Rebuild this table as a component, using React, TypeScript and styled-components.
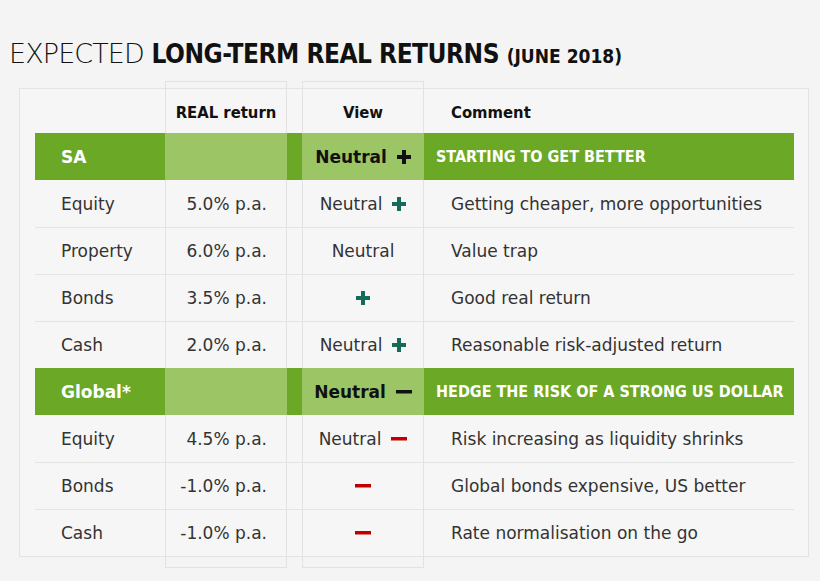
import React from "react";
import styled, { createGlobalStyle } from "styled-components";

const Global = createGlobalStyle`
  html, body { margin: 0; padding: 0; background: #f4f4f4; }
  body { font-family: "DejaVu Sans", "Liberation Sans", sans-serif; color: #333; }
`;

const Page = styled.div`
  width: 820px;
  height: 581px;
  background: #f4f4f4;
  box-sizing: border-box;
  padding-top: 36px;
  overflow: hidden;
`;

const Title = styled.h1`
  margin: 0 0 0 9px;
  font-family: "DejaVu Sans", sans-serif;
  font-size: 27px;
  line-height: 36px;
  font-weight: 200;
  color: #111;
  letter-spacing: -0.9px;
  white-space: nowrap;
`;

const Strong = styled.span`
  font-family: "DejaVu Sans Condensed", "DejaVu Sans", sans-serif;
  font-weight: 700;
  font-size: 26px;
  letter-spacing: -0.5px;
`;

const Small = styled.span`
  font-family: "DejaVu Sans Condensed", "DejaVu Sans", sans-serif;
  font-weight: 700;
  font-size: 19px;
  letter-spacing: 0;
`;

const Panel = styled.div`
  margin: 14px 0 0 19px;
  width: 790px;
  box-sizing: border-box;
  border: 1px solid #e3e3e3;
  background: #f6f6f6;
  padding: 0 14px 0 15px;
  display: grid;
  grid-template-columns: 130px 122px 15px 122px 370px;
  grid-template-rows: 44px repeat(9, 47px);
`;

const Frame = styled.div<{ $col: number }>`
  grid-column: ${(p) => p.$col};
  grid-row: 1 / -1;
  margin: -8px 0 -12px 0;
  border: 1px solid #e2e2e2;
  z-index: 0;
`;

const Row = styled.div<{ $row: number; $sep?: boolean; $green?: boolean }>`
  grid-column: 1 / -1;
  grid-row: ${(p) => p.$row};
  display: grid;
  grid-template-columns: 130px 122px 15px 122px 370px;
  position: relative;
  z-index: 1;
  background: ${(p) => (p.$green ? "#6aa826" : "transparent")};
  border-top: ${(p) => (p.$sep ? "1px solid #e4e4e4" : "none")};
  font-size: 17px;
  align-items: center;
`;

const Cell = styled.div<{
  $align?: "left" | "right" | "center";
  $pad?: string;
  $light?: boolean;
  $bold?: boolean;
  $color?: string;
}>`
  height: 100%;
  display: flex;
  align-items: center;
  justify-content: ${(p) =>
    p.$align === "right" ? "flex-end" : p.$align === "center" ? "center" : "flex-start"};
  padding: ${(p) => p.$pad || "0"};
  box-sizing: border-box;
  background: ${(p) => (p.$light ? "#9cc566" : "transparent")};
  font-weight: ${(p) => (p.$bold ? 700 : 400)};
  color: ${(p) => p.$color || "#333"};
  white-space: nowrap;
`;

const HeadCell = styled(Cell)`
  font-family: "DejaVu Sans Condensed", "DejaVu Sans", sans-serif;
  font-size: 16.5px;
  font-weight: 700;
  color: #111;
  padding-top: 3px;
`;

const Caps = styled.span`
  font-family: "DejaVu Sans Condensed", "DejaVu Sans", sans-serif;
  font-weight: 700;
  font-size: 16px;
  color: #fff;
`;

const Sign = styled.svg<{ $solo?: boolean }>`
  margin-left: ${(p) => (p.$solo ? "0" : "10px")};
  flex: none;
`;

type Kind = "plus" | "minus";

const SignIcon = ({ kind, color, solo }: { kind: Kind; color: string; solo?: boolean }) =>
  kind === "plus" ? (
    <Sign $solo={solo} width="14" height="14" viewBox="0 0 14 14">
      <rect x="5" y="0" width="4" height="14" fill={color} />
      <rect x="0" y="5" width="14" height="4" fill={color} />
    </Sign>
  ) : (
    <Sign $solo={solo} width="16" height="4" viewBox="0 0 16 4">
      <rect x="0" y="0" width="16" height="3.5" fill={color} />
    </Sign>
  );

const TEAL = "#146b58";
const RED = "#c00000";

type Data = {
  label: string;
  ret: string;
  neutral: boolean;
  sign?: Kind;
  comment: string;
};

const sections: {
  name: string;
  sign: Kind;
  headline: string;
  rows: Data[];
}[] = [
  {
    name: "SA",
    sign: "plus",
    headline: "STARTING TO GET BETTER",
    rows: [
      { label: "Equity", ret: "5.0% p.a.", neutral: true, sign: "plus", comment: "Getting cheaper, more opportunities" },
      { label: "Property", ret: "6.0% p.a.", neutral: true, comment: "Value trap" },
      { label: "Bonds", ret: "3.5% p.a.", neutral: false, sign: "plus", comment: "Good real return" },
      { label: "Cash", ret: "2.0% p.a.", neutral: true, sign: "plus", comment: "Reasonable risk-adjusted return" },
    ],
  },
  {
    name: "Global*",
    sign: "minus",
    headline: "HEDGE THE RISK OF A STRONG US DOLLAR",
    rows: [
      { label: "Equity", ret: "4.5% p.a.", neutral: true, sign: "minus", comment: "Risk increasing as liquidity shrinks" },
      { label: "Bonds", ret: "-1.0% p.a.", neutral: false, sign: "minus", comment: "Global bonds expensive, US better" },
      { label: "Cash", ret: "-1.0% p.a.", neutral: false, sign: "minus", comment: "Rate normalisation on the go" },
    ],
  },
];

export default function App() {
  let r = 2;
  const rows: React.ReactNode[] = [];
  sections.forEach((s) => {
    rows.push(
      <Row key={s.name} $row={r++} $green>
        <Cell $pad="0 0 0 26px" $bold $color="#fff">{s.name}</Cell>
        <Cell $light />
        <Cell />
        <Cell $light $align="center" $bold $color="#111">
          Neutral
          <SignIcon kind={s.sign} color="#111" />
        </Cell>
        <Cell $pad="0 0 0 12px">
          <Caps>{s.headline}</Caps>
        </Cell>
      </Row>
    );
    s.rows.forEach((d, i) => {
      const color = d.sign === "minus" ? RED : TEAL;
      rows.push(
        <Row key={s.name + d.label} $row={r++} $sep={i > 0}>
          <Cell $pad="0 0 0 26px">{d.label}</Cell>
          <Cell $align="right" $pad="0 20px 0 0">{d.ret}</Cell>
          <Cell />
          <Cell $align="center">
            {d.neutral ? "Neutral" : null}
            {d.sign ? <SignIcon kind={d.sign} color={color} solo={!d.neutral} /> : null}
          </Cell>
          <Cell $pad="0 0 0 27px">{d.comment}</Cell>
        </Row>
      );
    });
  });

  return (
    <Page>
      <Global />
      <Title>
        EXPECTED <Strong>LONG-TERM REAL RETURNS</Strong> <Small>(JUNE 2018)</Small>
      </Title>
      <Panel>
        <Frame $col={2} />
        <Frame $col={4} />
        <Row $row={1}>
          <Cell />
          <HeadCell $align="center">REAL return</HeadCell>
          <Cell />
          <HeadCell $align="center">View</HeadCell>
          <HeadCell $pad="3px 0 0 27px">Comment</HeadCell>
        </Row>
        {rows}
      </Panel>
    </Page>
  );
}
